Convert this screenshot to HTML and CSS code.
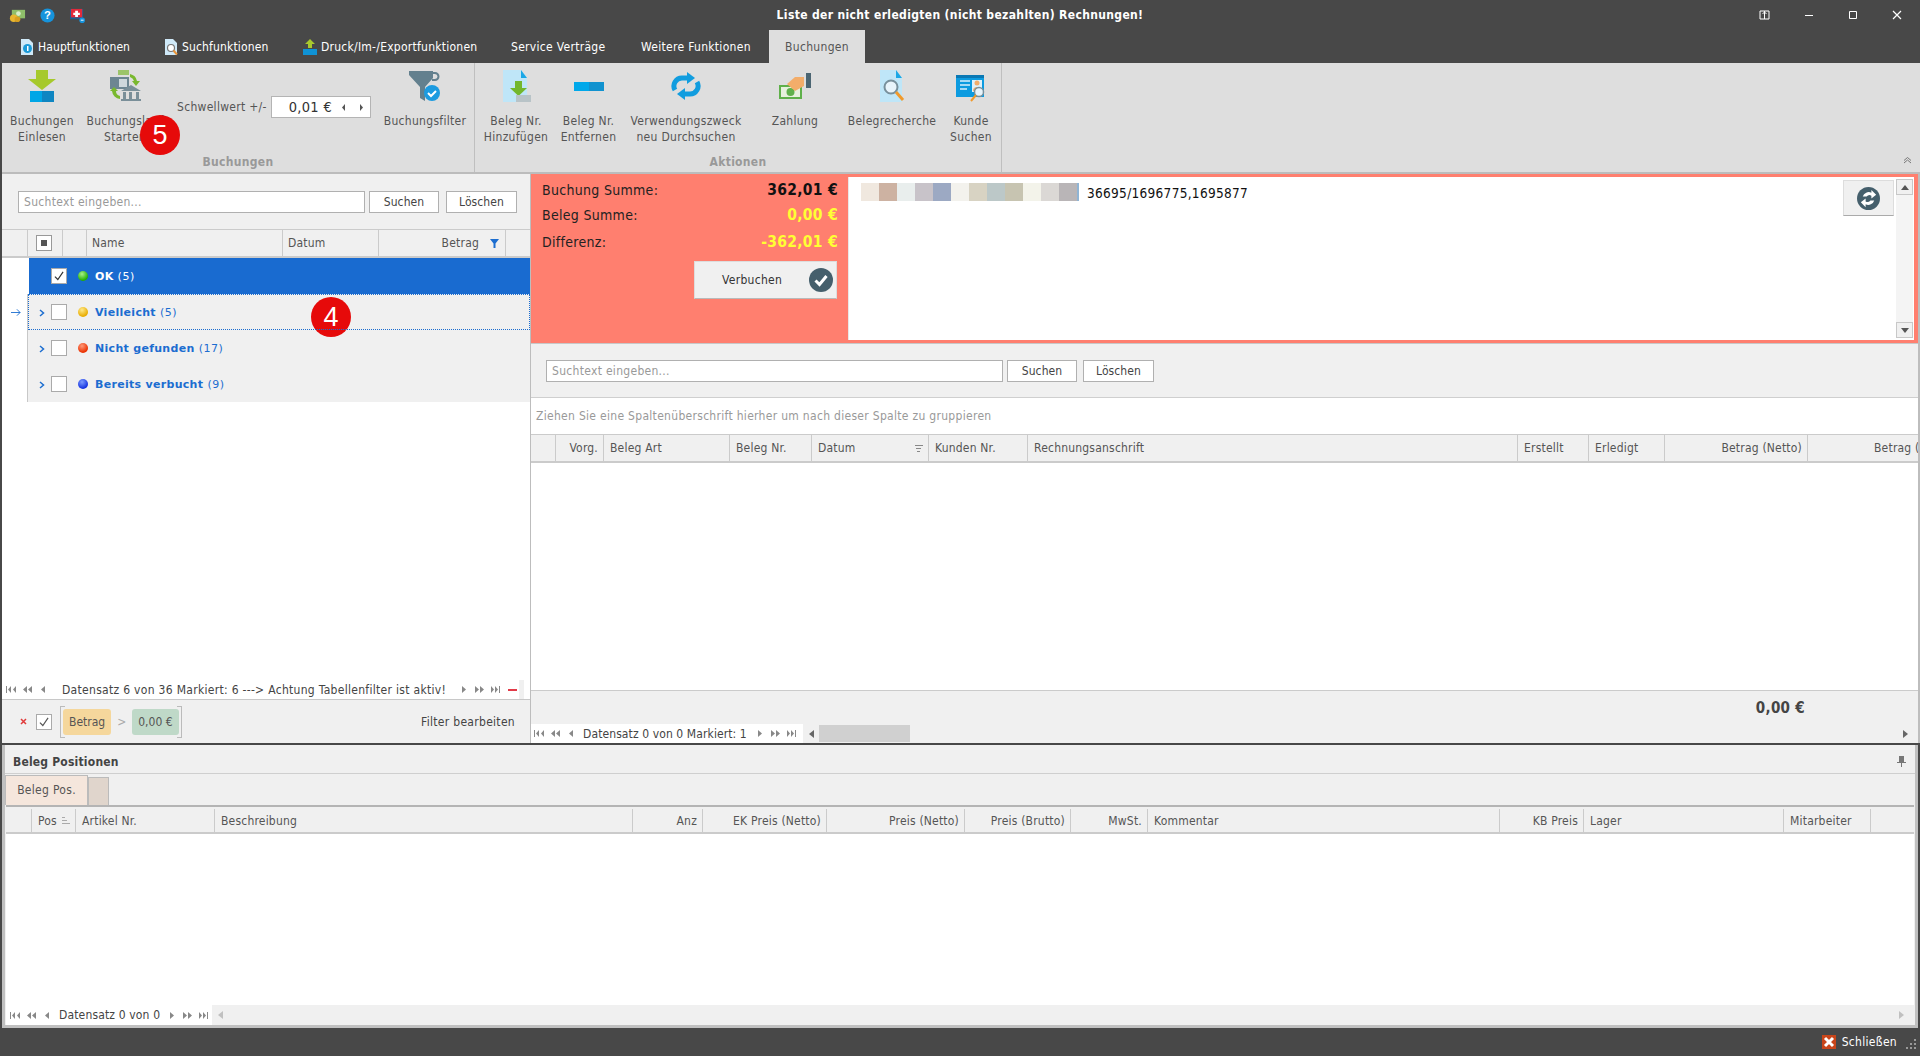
FILE: index.html
```html
<!DOCTYPE html>
<html lang="de">
<head>
<meta charset="utf-8">
<title>Liste der nicht erledigten Rechnungen</title>
<link rel="stylesheet" href="styles.css">
</head>
<body>
<svg class="defs" width="0" height="0">
  <symbol id="n-first" viewBox="0 0 11 7"><rect x="0" y="0" width="1" height="7"/><path d="M5 0v7L2 3.500zM10 0v7L7 3.500z"/></symbol>
  <symbol id="n-pp" viewBox="0 0 11 7"><path d="M5 0v7L1 3.500zM10 0v7L6 3.500z"/></symbol>
  <symbol id="n-p" viewBox="0 0 11 7"><path d="M7 0v7L3 3.500z"/></symbol>
  <symbol id="n-n" viewBox="0 0 11 7"><path d="M4 0v7l4-3.500z"/></symbol>
  <symbol id="n-nn" viewBox="0 0 11 7"><path d="M1 0v7l4-3.500zM6 0v7l4-3.500z"/></symbol>
  <symbol id="n-last" viewBox="0 0 11 7"><path d="M1 0v7l3-3.500zM5 0v7l3-3.500z"/><rect x="9" y="0" width="1" height="7"/></symbol>
</svg>

<header class="titlebar">
  <div class="qat">
    <svg class="qi" viewBox="0 0 18 14"><rect x="3" y="1" width="14" height="9" fill="#8fbf6a"/><circle cx="10" cy="5" r="2.500" fill="#d9ecc8"/><circle cx="5" cy="10" r="4" fill="#e9b62f"/><circle cx="9" cy="11" r="3" fill="#d9a021"/></svg>
    <svg class="qi" viewBox="0 0 16 16"><circle cx="8" cy="8" r="7.500" fill="#1693dc"/><text x="8" y="12" class="qmark">?</text></svg>
    <svg class="qi" viewBox="0 0 16 16"><rect x="0" y="1" width="14" height="11" fill="#1f5f8f"/><rect x="1" y="1" width="12" height="9" fill="#e32a3a"/><path d="M5.500 3h3v2h2v2.500h-2v2h-3v-2h-2V5h2z" fill="#fff"/><circle cx="13" cy="13" r="3" fill="#1693dc"/><rect x="11.500" y="12.500" width="3" height="1" fill="#fff"/></svg>
  </div>
  <h1 class="wintitle">Liste der nicht erledigten (nicht bezahlten) Rechnungen!</h1>
  <div class="winctl">
    <svg class="wc" viewBox="0 0 12 12"><path d="M1 2h9v8H1zM5.500 2v8M3.500 5l2-2 2 2" fill="none" stroke="#fff"/></svg>
    <svg class="wc" viewBox="0 0 12 12"><path d="M2 6.500h8" stroke="#fff"/></svg>
    <svg class="wc" viewBox="0 0 12 12"><path d="M2.500 2.500h7v7h-7z" fill="none" stroke="#fff"/></svg>
    <svg class="wc" viewBox="0 0 12 12"><path d="M2 2l8 8M10 2l-8 8" stroke="#fff" stroke-width="1.200"/></svg>
  </div>
</header>

<nav class="tabbar">
  <div class="tab t1"><svg class="ti" viewBox="0 0 14 18"><path d="M1 1h8l4 4v12H1z" fill="#cfe9f8"/><circle cx="7.500" cy="10.500" r="4.500" fill="#1b9ad8"/><rect x="7" y="8" width="1.500" height="5" fill="#fff"/></svg><span>Hauptfunktionen</span></div>
  <div class="tab t2"><svg class="ti" viewBox="0 0 14 18"><path d="M1 1h8l4 4v12H1z" fill="#cfe9f8"/><circle cx="7" cy="10" r="3.500" fill="#fff" stroke="#777" stroke-width="1.200"/><path d="M9.500 12.500l3.500 4" stroke="#e8943a" stroke-width="2"/></svg><span>Suchfunktionen</span></div>
  <div class="tab t3"><svg class="ti" viewBox="0 0 14 18"><path d="M7 1l5 5H9v4H5V6H2z" fill="#a9c92d"/><rect x="0" y="11" width="14" height="6" fill="#0f93d6"/></svg><span>Druck/Im-/Exportfunktionen</span></div>
  <div class="tab t4"><span>Service Verträge</span></div>
  <div class="tab t5"><span>Weitere Funktionen</span></div>
  <div class="tab t6 active"><span>Buchungen</span></div>
</nav>

<section class="ribbon">
  <div class="rgroup g1">
    <div class="ritems">
      <div class="ritem w-einlesen">
        <svg class="ricon" viewBox="0 0 32 32"><path d="M10 0h12v9h8L16 20 2 9h8z" fill="#a6c92b"/><rect x="4" y="21" width="12" height="11" fill="#00a6e6"/><rect x="16" y="21" width="12" height="11" fill="#0f86c2"/></svg>
        <div class="rlabel">Buchungen<br>Einlesen</div>
      </div>
      <div class="ritem w-lauf">
        <svg class="ricon" viewBox="0 0 32 32"><rect x="9" y="0" width="11" height="5" fill="#9cc46a"/><rect x="1" y="7" width="19" height="12" fill="#6d8692"/><path d="M10 9h8v8h-8z" fill="#cfd8dc"/><path d="M21 4a9 9 0 0 1 7 7h3l-4 5-4-5h2a6 6 0 0 0-4-4z" fill="#79b82e"/><path d="M3 21h-2l4-4 4 4H7a5 5 0 0 0 4 5v3a9 9 0 0 1-8-8z" fill="#79b82e"/><path d="M12 21l10-6 10 6zM14 22h3v7h-3zM20 22h3v7h-3zM27 22h3v7h-3zM12 29h20v2H12z" fill="#7a8f99"/></svg>
        <div class="rlabel">Buchungslauf<br>Starten</div>
      </div>
      <div class="rthresh">
        <span class="threshlabel">Schwellwert +/-</span>
        <div class="spin"><span class="spinval">0,01 €</span><span class="spinbtns"><svg class="sb" viewBox="0 0 6 7"><path d="M4 0v7L1 3.500z"/></svg><svg class="sb" viewBox="0 0 6 7"><path d="M2 0v7l3-3.500z"/></svg></span></div>
      </div>
      <div class="ritem w-filter">
        <svg class="ricon" viewBox="0 0 32 32"><path d="M0 1h24v7l-8 9v14l-5-3V17L0 5z" fill="#63808e"/><path d="M22 3h4a3 3 0 0 1 0 7h-3" fill="none" stroke="#63808e" stroke-width="2"/><circle cx="23" cy="23" r="8" fill="#1c9be0"/><path d="M19 23l3 3 5-5" fill="none" stroke="#fff" stroke-width="2"/></svg>
        <div class="rlabel">Buchungsfilter</div>
      </div>
    </div>
    <div class="gcap">Buchungen</div>
  </div>
  <div class="rgroup g2">
    <div class="ritems">
      <div class="ritem w-hinzu">
        <svg class="ricon" viewBox="0 0 32 32"><path d="M3 0h18l6 8v24H3z" fill="#bfe6f8"/><path d="M21 0l6 8h-6z" fill="#1aa7e6"/><path d="M15 11h7v7h5l-8.500 8L10 18h5z" fill="#73b72d"/><rect x="16" y="25" width="15" height="7" fill="#b8c3c7"/></svg>
        <div class="rlabel">Beleg Nr.<br>Hinzufügen</div>
      </div>
      <div class="ritem w-entf">
        <svg class="ricon" viewBox="0 0 32 32"><rect x="1" y="12" width="15" height="9" fill="#00a8ea"/><rect x="16" y="12" width="15" height="9" fill="#1192cf"/></svg>
        <div class="rlabel">Beleg Nr.<br>Entfernen</div>
      </div>
      <div class="ritem w-zweck">
        <svg class="ricon" viewBox="0 0 32 32"><path d="M5 20A8 8 0 0 1 12 8h6" fill="none" stroke="#119ddf" stroke-width="5"/><path d="M17 2l8 6-8 6z" fill="#119ddf"/><path d="M27 12a8 8 0 0 1-7 12h-6" fill="none" stroke="#119ddf" stroke-width="5"/><path d="M15 18l-8 6 8 6z" fill="#119ddf"/></svg>
        <div class="rlabel">Verwendungszweck<br>neu Durchsuchen</div>
      </div>
      <div class="ritem w-zahl">
        <svg class="ricon" viewBox="0 0 32 32"><rect x="0" y="15" width="23" height="14" fill="#5fb04a"/><rect x="2" y="17" width="19" height="10" fill="#e6f1dc"/><circle cx="11.500" cy="22" r="4" fill="#5fb04a"/><path d="M8 14l8-7h9v9l-9 5z" fill="#f3ad6a"/><rect x="27" y="3" width="5" height="15" fill="#4b6572"/></svg>
        <div class="rlabel">Zahlung</div>
      </div>
      <div class="ritem w-recher">
        <svg class="ricon" viewBox="0 0 32 32"><path d="M4 0h16l6 8v24H4z" fill="#bfe6f8"/><path d="M20 0l6 8h-6z" fill="#1aa7e6"/><circle cx="15" cy="17" r="6.500" fill="#e8f4fb" stroke="#78909c" stroke-width="2"/><path d="M20 22l7 8" stroke="#f19a2c" stroke-width="3"/></svg>
        <div class="rlabel">Belegrecherche</div>
      </div>
      <div class="ritem w-kunde">
        <svg class="ricon" viewBox="0 0 32 32"><rect x="1" y="5" width="28" height="22" fill="#0c9be0"/><rect x="1" y="5" width="28" height="3" fill="#0a78b4"/><path d="M5 11h10M5 15h10M5 19h7" stroke="#d6effb" stroke-width="1.500"/><rect x="17" y="10" width="10" height="12" fill="#dff1fa"/><circle cx="22" cy="13" r="2.500" fill="#f3ad6a"/><path d="M18 21a4 4 0 0 1 8 0z" fill="#f3ad6a"/><circle cx="24" cy="22" r="4.500" fill="#e8f4fb" stroke="#78909c" stroke-width="1.500"/><path d="M21 25l-5 6" stroke="#f19a2c" stroke-width="2"/></svg>
        <div class="rlabel">Kunde<br>Suchen</div>
      </div>
    </div>
    <div class="gcap">Aktionen</div>
  </div>
  <div class="rgroup g3">
    <svg class="collapse" viewBox="0 0 9 7"><path d="M1 6l3.500-3L8 6M1 3.500L4.500 .5 8 3.500" fill="none" stroke="#777"/></svg>
  </div>
</section>

<main class="mainarea">
  <section class="leftpane">
    <div class="searchbar sb-left">
      <div class="searchinput si-left">Suchtext eingeben...</div>
      <div class="btn b-such">Suchen</div>
      <div class="btn b-los">Löschen</div>
    </div>
    <div class="gridhead lefthead">
      <div class="hc"></div>
      <div class="hc center"><span class="selall"><span class="selsq"></span></span></div>
      <div class="hc"></div>
      <div class="hc">Name</div>
      <div class="hc">Datum</div>
      <div class="hc right">Betrag<svg class="funnel" viewBox="0 0 9 9"><path d="M0 0h9L5.500 4.500V9h-2V4.500z"/></svg></div>
      <div class="hc"></div>
    </div>
    <div class="tree">
      <div class="trow selected">
        <div class="ind"></div>
        <div class="exp"></div>
        <span class="chk on"><svg viewBox="0 0 12 12"><path d="M2.500 6.500l2.500 2.500 4.500-6.500" fill="none" stroke="#333"/></svg></span>
        <span class="dot d-green"></span>
        <span class="tname">OK <small>(5)</small></span>
      </div>
      <div class="trow focus">
        <div class="ind"><svg class="rowarrow" viewBox="0 0 11 9"><path d="M0 4.500h10M6.500 1l3.500 3.500L6.500 8" fill="none" stroke="#1d6ed0"/></svg></div>
        <div class="exp"><svg viewBox="0 0 6 8"><path d="M1 1l3.500 3L1 7" fill="none" stroke="#1d6ed0" stroke-width="1.500"/></svg></div>
        <span class="chk"></span>
        <span class="dot d-yellow"></span>
        <span class="tname">Vielleicht <small>(5)</small></span>
        <span class="badge b4">4</span>
      </div>
      <div class="trow">
        <div class="ind"></div>
        <div class="exp"><svg viewBox="0 0 6 8"><path d="M1 1l3.500 3L1 7" fill="none" stroke="#1d6ed0" stroke-width="1.500"/></svg></div>
        <span class="chk"></span>
        <span class="dot d-red"></span>
        <span class="tname">Nicht gefunden <small>(17)</small></span>
      </div>
      <div class="trow">
        <div class="ind"></div>
        <div class="exp"><svg viewBox="0 0 6 8"><path d="M1 1l3.500 3L1 7" fill="none" stroke="#1d6ed0" stroke-width="1.500"/></svg></div>
        <span class="chk"></span>
        <span class="dot d-blue"></span>
        <span class="tname">Bereits verbucht <small>(9)</small></span>
      </div>
    </div>
    <div class="leftempty"></div>
    <div class="navbar leftnav">
      <svg class="ni"><use href="#n-first"/></svg><svg class="ni"><use href="#n-pp"/></svg><svg class="ni"><use href="#n-p"/></svg>
      <span class="navtext">Datensatz 6 von 36 Markiert: 6 ---&gt; Achtung Tabellenfilter ist aktiv!</span>
      <svg class="ni"><use href="#n-n"/></svg><svg class="ni"><use href="#n-nn"/></svg><svg class="ni"><use href="#n-last"/></svg>
      <span class="minus"></span>
      <span class="navrest"></span>
    </div>
    <div class="filterbar">
      <svg class="fx" viewBox="0 0 7 7"><path d="M1 1l5 5M6 1L1 6" stroke="#e03a3a" stroke-width="1.500"/></svg>
      <span class="chk small"><svg viewBox="0 0 12 12"><path d="M2.500 6.500l2.500 2.500 4.500-6.500" fill="none" stroke="#555"/></svg></span>
      <div class="fexpr">
        <span class="fpill fp-field">Betrag</span>
        <span class="fop">&gt;</span>
        <span class="fpill fp-val">0,00 €</span>
      </div>
      <span class="fedit">Filter bearbeiten</span>
    </div>
  </section>

  <section class="rightpane">
    <div class="summary">
      <div class="sumleft">
        <div class="sumrow r1"><span>Buchung Summe:</span><b>362,01 €</b></div>
        <div class="sumrow r2"><span>Beleg Summe:</span><b class="yel">0,00 €</b></div>
        <div class="sumrow r3"><span>Differenz:</span><b class="yel">-362,01 €</b></div>
        <div class="verbuchen"><span>Verbuchen</span><svg class="vicon" viewBox="0 0 24 24"><circle cx="12" cy="12" r="12" fill="#455f6c"/><path d="M6.500 12.500l4 4 7-8.500" fill="none" stroke="#fff" stroke-width="3"/></svg></div>
      </div>
      <div class="memo">
        <div class="memoline">
          <span class="sw s1"></span><span class="sw s2"></span><span class="sw s3"></span><span class="sw s4"></span><span class="sw s5"></span><span class="sw s6"></span><span class="sw s7"></span><span class="sw s8"></span><span class="sw s9"></span><span class="sw s10"></span><span class="sw s11"></span><span class="sw s12"></span><span class="sw s13"></span>
          <span class="memotext">36695/1696775,1695877</span>
        </div>
        <div class="refresh"><svg viewBox="0 0 24 24"><circle cx="12" cy="12" r="12" fill="#455f6c"/><path d="M6 10a6.500 6.500 0 0 1 9-4V3l5 5-5 4V9a4 4 0 0 0-5 1zM18 14a6.500 6.500 0 0 1-9 4v3l-5-5 5-4v3a4 4 0 0 0 5-1z" fill="#fff"/></svg></div>
        <div class="vscroll">
          <div class="vbtn"><svg viewBox="0 0 8 5"><path d="M4 0l4 5H0z"/></svg></div>
          <div class="vtrack"></div>
          <div class="vbtn"><svg viewBox="0 0 8 5"><path d="M0 0h8L4 5z"/></svg></div>
        </div>
      </div>
    </div>
    <div class="searchbar sb-right">
      <div class="searchinput si-right">Suchtext eingeben...</div>
      <div class="btn b-such2">Suchen</div>
      <div class="btn b-los2">Löschen</div>
    </div>
    <div class="grouppanel">Ziehen Sie eine Spaltenüberschrift hierher um nach dieser Spalte zu gruppieren</div>
    <div class="gridhead righthead">
      <div class="hc"></div>
      <div class="hc right">Vorg.</div>
      <div class="hc">Beleg Art</div>
      <div class="hc">Beleg Nr.</div>
      <div class="hc between">Datum<svg class="sorticon" viewBox="0 0 8 7"><path d="M0 .5h8M1 3.500h5M2 6.500h3" stroke="#888"/></svg></div>
      <div class="hc">Kunden Nr.</div>
      <div class="hc">Rechnungsanschrift</div>
      <div class="hc">Erstellt</div>
      <div class="hc">Erledigt</div>
      <div class="hc right">Betrag (Netto)</div>
      <div class="hc right clip">Betrag (Brutto)</div>
    </div>
    <div class="rightbody"></div>
    <div class="rightfoot"><b>0,00 €</b></div>
    <div class="rightnavrow">
      <div class="navbar rightnav">
        <svg class="ni"><use href="#n-first"/></svg><svg class="ni"><use href="#n-pp"/></svg><svg class="ni"><use href="#n-p"/></svg>
        <span class="navtext">Datensatz 0 von 0 Markiert: 1</span>
        <svg class="ni"><use href="#n-n"/></svg><svg class="ni"><use href="#n-nn"/></svg><svg class="ni"><use href="#n-last"/></svg>
      </div>
      <svg class="harrow" viewBox="0 0 6 8"><path d="M5 0v8L0 4z"/></svg>
      <div class="hthumb"></div>
      <svg class="harrow rarrow" viewBox="0 0 6 8"><path d="M0 0v8l5-4z"/></svg>
    </div>
  </section>
</main>

<section class="bottompanel">
  <div class="bp-title"><span>Beleg Positionen</span><svg class="pin" viewBox="0 0 9 11"><path d="M2 0h5v6h2v1H5v4H4V7H0V6h2z" fill="#777"/></svg></div>
  <div class="bp-tabs"><div class="ptab on">Beleg Pos.</div><div class="ptab off"></div></div>
  <div class="gridhead bottomhead">
    <div class="hc"></div>
    <div class="hc between">Pos<svg class="sorticon" viewBox="0 0 8 7"><path d="M0 .5h3M0 3.500h5M0 6.500h8" stroke="#aaa"/></svg></div>
    <div class="hc">Artikel Nr.</div>
    <div class="hc">Beschreibung</div>
    <div class="hc right">Anz</div>
    <div class="hc right">EK Preis (Netto)</div>
    <div class="hc right">Preis (Netto)</div>
    <div class="hc right">Preis (Brutto)</div>
    <div class="hc right">MwSt.</div>
    <div class="hc">Kommentar</div>
    <div class="hc right">KB Preis</div>
    <div class="hc">Lager</div>
    <div class="hc">Mitarbeiter</div>
    <div class="hc"></div>
  </div>
  <div class="bp-body"></div>
  <div class="bp-navrow">
    <div class="navbar bpnav">
      <svg class="ni"><use href="#n-first"/></svg><svg class="ni"><use href="#n-pp"/></svg><svg class="ni"><use href="#n-p"/></svg>
      <span class="navtext">Datensatz 0 von 0</span>
      <svg class="ni"><use href="#n-n"/></svg><svg class="ni"><use href="#n-nn"/></svg><svg class="ni"><use href="#n-last"/></svg>
    </div>
    <svg class="harrow light" viewBox="0 0 6 8"><path d="M5 0v8L0 4z"/></svg>
    <svg class="harrow light rarrow" viewBox="0 0 6 8"><path d="M0 0v8l5-4z"/></svg>
  </div>
</section>

<footer class="statusbar">
  <svg class="closeicon" viewBox="0 0 14 14"><rect width="14" height="14" fill="#c8451a"/><path d="M3 3l8 8M11 3l-8 8" stroke="#fff" stroke-width="3"/></svg>
  <span class="closetext">Schließen</span>
  <svg class="grip" viewBox="0 0 11 11"><path d="M8 0h2v2H8zM4 4h2v2H4zM8 4h2v2H8zM0 8h2v2H0zM4 8h2v2H4zM8 8h2v2H8z" fill="#999"/></svg>
</footer>

<span class="badge b5">5</span>
</body>
</html>
```

FILE: styles.css
```css
* { box-sizing: border-box; }
html, body { margin: 0; padding: 0; }
body {
  width: 1920px; height: 1056px; overflow: hidden; position: relative;
  background: #484848; display: flex; flex-direction: column;
  font-family: "DejaVu Sans", "Liberation Sans", sans-serif;
  font-stretch: condensed; font-size: 12px; color: #555; letter-spacing: .3px;
}
.defs { position: absolute; }

/* title bar */
.titlebar { height: 30px; display: flex; align-items: center; position: relative; color: #fff; flex: none; }
.qat { display: flex; align-items: center; gap: 13px; padding-left: 9px; }
.qi { width: 17px; height: 15px; }
.qmark { font: bold 12px "Liberation Sans", sans-serif; fill: #fff; text-anchor: middle; }
.wintitle { position: absolute; left: 0; right: 0; top: 0; margin: 0; line-height: 30px; text-align: center; font-size: 12px; font-weight: bold; color: #fff; letter-spacing: .35px; }
.winctl { margin-left: auto; display: flex; gap: 32px; padding-right: 17px; z-index: 1; }
.wc { width: 12px; height: 12px; }

/* tabs */
.tabbar { height: 33px; display: flex; flex: none; position: relative; }
.tab { display: flex; align-items: center; gap: 4px; color: #fff; font-size: 12px; height: 33px; white-space: nowrap; padding-top: 1px; }
.ti { width: 14px; height: 18px; flex: none; }
.t1 { margin-left: 20px; width: 144px; letter-spacing: .1px; }
.t2 { width: 139px; letter-spacing: .15px; }
.t3 { width: 208px; letter-spacing: .25px; }
.t4 { width: 130px; }
.t5 { width: 128px; }
.active { background: #dedede; color: #555; width: 96px; justify-content: center; }

/* ribbon */
.ribbon { height: 111px; flex: none; display: flex; background: #dedede; margin-left: 2px; border-bottom: 2px solid #bcbcbc; }
.rgroup { display: flex; flex-direction: column; height: 109px; border-right: 1px solid #bfbfbf; position: relative; }
.g1 { width: 473px; }
.g2 { width: 527px; }
.g3 { flex: 1; border-right: 0; }
.ritems { display: flex; height: 89px; }
.ritem { display: flex; flex-direction: column; align-items: center; padding-top: 7px; flex: none; }
.ricon { width: 32px; height: 32px; display: block; flex: none; }
.rlabel { margin-top: 11px; line-height: 16px; text-align: center; white-space: nowrap; color: #555; }
.w-einlesen { width: 80px; }
.w-lauf { width: 86px; }
.rthresh { display: flex; align-items: center; height: 22px; margin-top: 33px; margin-left: 9px; flex: none; width: 208px; }
.threshlabel { color: #555; width: 94px; flex: none; white-space: nowrap; font-size: 12px; }
.spin { width: 100px; height: 22px; background: #fff; border: 1px solid #b4b4b4; display: flex; align-items: center; flex: none; }
.spinval { flex: 1; text-align: right; font-size: 14.500px; color: #333; padding-right: 9px; white-space: nowrap; }
.spinbtns { display: flex; gap: 11px; padding-right: 6px; }
.sb { width: 6px; height: 7px; fill: #555; }
.w-filter { width: 80px; }
.w-hinzu { width: 72px; margin-left: 5px; }
.w-entf { width: 73px; }
.w-zweck { width: 122px; }
.w-zahl { width: 96px; }
.w-recher { width: 98px; }
.w-kunde { width: 60px; }
.gcap { text-align: center; font-weight: bold; color: #999; line-height: 16px; margin-top: 2px; font-size: 12px; }
.collapse { position: absolute; right: 8px; bottom: 8px; width: 9px; height: 7px; }

/* main */
.mainarea { height: 569px; flex: none; display: flex; background: #bdbdbd; margin-left: 2px; }
.leftpane { width: 528px; flex: none; display: flex; flex-direction: column; background: #f0f0f0; }
.rightpane { width: 1388px; flex: none; display: flex; flex-direction: column; background: #fff; border-left: 1px solid #bdbdbd; overflow: hidden; }

.searchbar { display: flex; align-items: center; background: #f0f0f0; flex: none; }
.sb-left { height: 55px; padding-left: 16px; }
.sb-right { height: 55px; padding-left: 15px; border-top: 1px solid #c8c8c8; border-bottom: 1px solid #cfcfcf; }
.searchinput { height: 22px; background: #fff; border: 1px solid #b0b0b0; color: #999; line-height: 20px; padding-left: 5px; white-space: nowrap; }
.si-left { width: 347px; }
.si-right { width: 457px; }
.btn { height: 22px; background: #fff; border: 1px solid #b0b0b0; color: #444; line-height: 20px; text-align: center; flex: none; letter-spacing: .1px; }
.b-such { width: 70px; margin-left: 4px; }
.b-los { width: 71px; margin-left: 7px; }
.b-such2 { width: 70px; margin-left: 4px; }
.b-los2 { width: 71px; margin-left: 6px; }

/* grids */
.gridhead { display: grid; height: 29px; background: #f0f0f0; border-top: 1px solid #cbcbcb; border-bottom: 2px solid #cbcbcb; flex: none; }
.hc { display: flex; align-items: center; padding: 0 5px 0 6px; border-right: 1px solid #cbcbcb; white-space: nowrap; color: #555; overflow: hidden; min-width: 0; letter-spacing: .2px; }
.hc:last-child { border-right: 0; }
.hc.right { justify-content: flex-end; }
.hc.center { justify-content: center; padding: 0 2px 0 0; }
.hc.between { justify-content: space-between; }
.hc.clip { justify-content: flex-start; padding-left: 66px; }
.lefthead { grid-template-columns: 26px 35px 24px 196px 96px 127px 1fr; }
.lefthead .hc { padding-left: 5px; }
.lefthead .hc.center { padding-left: 0; }
.righthead { grid-template-columns: 25px 48px 126px 82px 117px 99px 490px 71px 76px 143px 1fr; }
.bottomhead { grid-template-columns: 26px 44px 139px 418px 70px 124px 138px 106px 77px 352px 84px 200px 87px 1fr; margin: 0 1px; border-top: 2px solid #b4b4b4; padding-top: 2px; }
.selall { width: 16px; height: 16px; border: 1px solid #999; background: #fff; display: flex; align-items: center; justify-content: center; }
.selsq { width: 6px; height: 6px; background: #555; }
.funnel { width: 9px; height: 9px; fill: #1d6ed0; margin-left: 11px; margin-right: 1px; }
.sorticon { width: 8px; height: 7px; flex: none; }

/* tree */
.tree { display: flex; flex-direction: column; flex: none; background: #fff; }
.trow { height: 36px; display: flex; align-items: center; position: relative; }
.trow:nth-child(n+2) { background: linear-gradient(90deg, #fff 25px, #c8c8c8 25px, #c8c8c8 26px, #f0f0f0 26px); }
.ind { width: 10px; flex: none; margin-left: 9px; margin-right: 6px; }
.rowarrow { width: 10px; height: 9px; display: block; }
.exp { width: 24px; flex: none; padding-left: 12px; padding-top: 1px; }
.exp svg { width: 6px; height: 8px; display: block; }
.chk { width: 16px; height: 16px; border: 1px solid #aaa; background: #fff; flex: none; display: block; }
.chk svg { width: 14px; height: 14px; display: block; }
.dot { width: 10px; height: 10px; border-radius: 50%; margin-left: 11px; flex: none; }
.d-green { background: radial-gradient(circle at 40% 30%, #a8f08a, #22b000 70%); }
.d-yellow { background: radial-gradient(circle at 40% 30%, #ffe98a, #e8ac00 70%); }
.d-red { background: radial-gradient(circle at 40% 30%, #ff9a7a, #ea3000 70%); }
.d-blue { background: radial-gradient(circle at 40% 30%, #7a9aff, #1432e0 70%); }
.tname { margin-left: 7px; font-weight: bold; font-stretch: normal; font-size: 11px; color: #1c6dd0; white-space: nowrap; }
.tname small { font-weight: normal; font-size: 11px; letter-spacing: .5px; }
.trow.selected { background: linear-gradient(90deg, #fff 27px, #196bd0 27px); }
.selected .tname { color: #fff; }
.trow.focus { z-index: 2; }
.trow.focus::after { content: ""; position: absolute; left: 26px; right: 0; top: 0; bottom: 0; border: 1px dotted #1c6dd0; pointer-events: none; }

.leftempty { flex: 1; background: #fff; }
.navbar { display: flex; align-items: center; background: #fff; height: 19px; flex: none; }
.ni { width: 11px; height: 7px; fill: #888; flex: none; margin-right: 5px; }
.navtext { color: #444; white-space: nowrap; margin: 0 9px 0 3px; }
.leftnav { padding-left: 4px; }
.leftnav .navtext { margin: 0 12px 0 8px; }
.minus { width: 9px; height: 2px; background: #e23a48; margin-left: 2px; flex: none; }
.navrest { width: 5px; height: 19px; background: #f0f0f0; margin-left: 2px; flex: none; }

.filterbar { height: 44px; flex: none; display: flex; align-items: center; border-top: 1px solid #c8c8c8; padding-left: 18px; background: #f0f0f0; }
.fx { width: 7px; height: 7px; flex: none; }
.filterbar .chk { margin-left: 9px; }
.fexpr { margin-left: 8px; height: 32px; display: flex; align-items: center; gap: 6px; padding: 0 3px; position: relative; letter-spacing: 0; }
.fexpr::before, .fexpr::after { content: ""; position: absolute; top: 0; bottom: 0; width: 4px; border: 1px solid #bbb; }
.fexpr::before { left: 0; border-right: 0; }
.fexpr::after { right: 0; border-left: 0; }
.fpill { height: 26px; line-height: 26px; padding: 0 6px; border-radius: 3px; color: #555; }
.fp-field { background: #f5d79c; }
.fp-val { background: #bfd9c8; }
.fop { color: #aaa; }
.fedit { margin-left: auto; margin-right: 15px; color: #444; }

/* summary */
.summary { height: 169px; flex: none; background: #ff7f6f; display: flex; }
.sumleft { width: 317px; flex: none; padding: 0 10px 0 11px; display: flex; flex-direction: column; }
.sumrow { display: flex; justify-content: space-between; font-size: 14px; color: #222; align-items: center; height: 25px; }
.sumrow.r1 { margin-top: 3px; }
.sumrow.r3 { margin-top: 2px; }
.sumrow b { font-weight: bold; color: #111; font-size: 15.500px; }
.sumrow b.yel { color: #ffff33; }
.verbuchen { width: 143px; height: 38px; margin: 7px 1px 0 auto; background: #f0f0f0; border: 1px solid #ddd; border-bottom-color: #b9b9b9; display: flex; align-items: center; color: #333; flex: none; }
.verbuchen span { margin-left: 27px; }
.vicon { width: 24px; height: 24px; margin-left: auto; margin-right: 3px; }
.memo { width: 1066px; height: 163px; margin-top: 3px; background: #fff; position: relative; flex: none; border-left: 1px solid #e8e8e8; }
.memoline { display: flex; align-items: center; padding: 6px 0 0 12px; }
.sw { width: 18px; height: 18px; flex: none; }
.sw.s13 { width: 2px; }
.s1 { background: #f0e8df; } .s2 { background: #cdb2a2; } .s3 { background: #e9eeed; } .s4 { background: #c8c3c9; }
.s5 { background: #9ca9c3; } .s6 { background: #f3f2ed; } .s7 { background: #d8d3c3; } .s8 { background: #bcc8c8; }
.s9 { background: #c7c4b1; } .s10 { background: #f3f3ea; } .s11 { background: #dbd8d5; } .s12 { background: #b9b5b7; }
.s13 { background: #90b4d4; }
.memotext { color: #111; font-size: 13.500px; margin-left: 8px; white-space: nowrap; padding-top: 2px; }
.refresh { position: absolute; right: 20px; top: 3px; width: 51px; height: 36px; background: #f0f0f0; border: 1px solid #ddd; border-bottom-color: #aaa; display: flex; align-items: center; justify-content: center; }
.refresh svg { width: 23px; height: 23px; }
.vscroll { position: absolute; right: 1px; top: 2px; bottom: 2px; width: 17px; display: flex; flex-direction: column; }
.vbtn { height: 16px; background: #f0f0f0; border: 1px solid #c8c8c8; display: flex; align-items: center; justify-content: center; flex: none; }
.vbtn svg { width: 8px; height: 5px; fill: #555; }
.vtrack { flex: 1; background: #f4f4f4; }

.grouppanel { height: 36px; flex: none; background: #fff; color: #999; line-height: 37px; padding-left: 5px; white-space: nowrap; }
.rightbody { height: 227px; flex: none; background: #fff; }
.rightfoot { flex: none; height: 34px; background: #f0f0f0; border-top: 1px solid #cbcbcb; text-align: right; padding: 8px 113px 0 0; }
.rightfoot b { font-size: 15px; color: #444; }
.rightnavrow { flex: 1; display: flex; align-items: center; background: #f0f0f0; }
.rightnav { width: 272px; padding-left: 3px; }
.rightnav .navtext { margin: 0 7px 0 1px; letter-spacing: .1px; }
.harrow { width: 6px; height: 8px; fill: #666; margin-left: 6px; flex: none; }
.hthumb { width: 91px; height: 17px; background: #d0d0d0; margin-left: 4px; flex: none; }
.harrow.rarrow { margin-left: auto; margin-right: 9px; }
.harrow.light { fill: #c0c0c0; }

/* bottom */
.bottompanel { flex: none; height: 283px; margin: 2px 5px 0 5px; background: #f0f0f0; display: flex; flex-direction: column; border-bottom: 3px solid #c0c0c0; box-shadow: -3px 0 0 #c0c0c0, 3px 0 0 #c0c0c0; }
.bp-title { height: 29px; flex: none; display: flex; align-items: center; justify-content: space-between; padding: 5px 9px 0 8px; border-bottom: 1px solid #cfcfcf; font-weight: bold; color: #444; letter-spacing: .2px; }
.pin { width: 9px; height: 11px; }
.bp-tabs { height: 31px; flex: none; display: flex; align-items: flex-end; padding-top: 2px; }
.ptab { height: 29px; border: 1px solid #bbb; border-bottom: 0; }
.ptab.on { width: 83px; height: 30px; background: #f5e6dc; color: #555; line-height: 29px; text-align: center; }
.ptab.off { width: 21px; background: #e0d5cc; height: 28px; }
.bp-body { flex: 1; background: #fff; margin: 0 1px; }
.bp-navrow { height: 20px; flex: none; display: flex; align-items: center; background: #f0f0f0; margin: 0 1px; }
.bpnav { width: 206px; height: 20px; padding-left: 4px; }
.bpnav .navtext { margin: 0 6px 0 1px; letter-spacing: .15px; }

/* status */
.statusbar { flex: 1; display: flex; align-items: center; justify-content: flex-end; padding: 0 3px 0 0; }
.closeicon { width: 14px; height: 14px; }
.closetext { color: #fff; margin-left: 6px; }
.grip { width: 11px; height: 11px; margin-left: 9px; margin-top: 4px; }

/* badges */
.badge { position: absolute; width: 40px; height: 40px; border-radius: 50%; background: #e60a0a; color: #fff; font: 27px/40px "Liberation Sans", sans-serif; text-align: center; letter-spacing: 0; }
.b4 { left: 309px; top: 3px; }
.b5 { left: 140px; top: 115px; }
```
